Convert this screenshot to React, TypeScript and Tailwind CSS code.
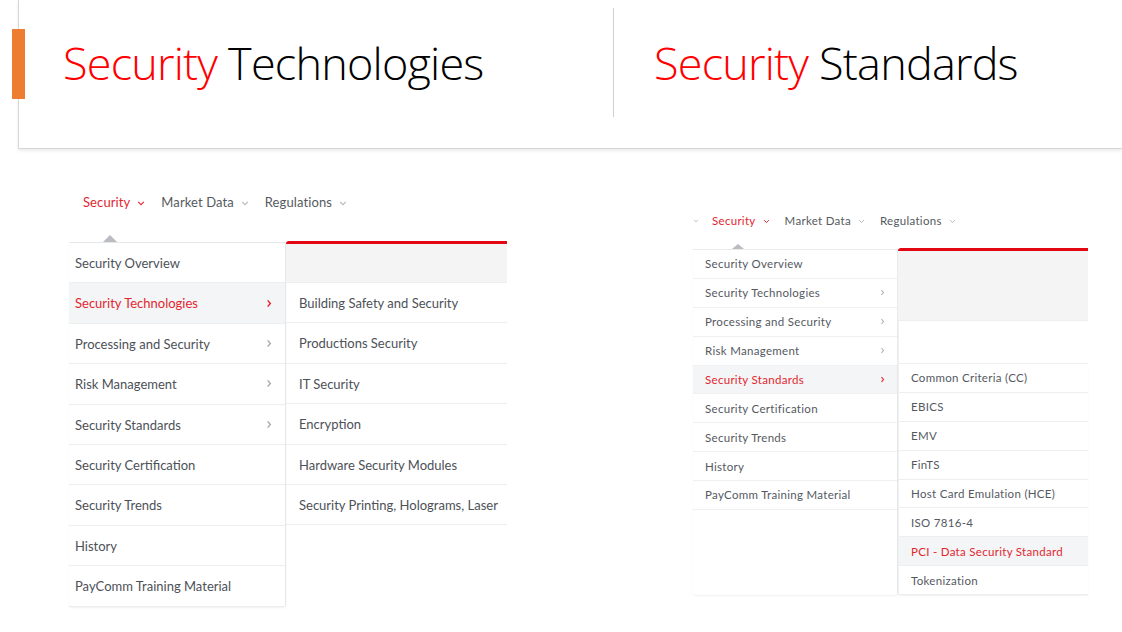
import React from "react";

const RED = "text-[#e3262f]";

function ChevronDown({ className }: { className?: string }) {
  return (
    <svg viewBox="0 0 10 6" className={className} fill="none" stroke="currentColor" strokeWidth="1.4">
      <polyline points="1.5,1 5,4.5 8.5,1" />
    </svg>
  );
}

function ChevronRight({ className }: { className?: string }) {
  return (
    <svg viewBox="0 0 6 10" className={className} fill="none" stroke="currentColor" strokeWidth="1.6">
      <polyline points="1.5,1.5 4.5,5 1.5,8.5" />
    </svg>
  );
}

function Nav({ small }: { small?: boolean }) {
  const text = small ? "text-[11.5px] tracking-[0.3px]" : "text-[13px] tracking-[0.1px]";
  const chev = small ? "w-[7px] h-[5px]" : "w-[8px] h-[5px]";
  const items = ["Security", "Market Data", "Regulations"];
  return (
    <div className={`flex items-center ${small ? "gap-[15px]" : "gap-[16px]"} ${text}`}>
      {items.map((label, i) => (
        <div key={label} className={`flex items-center gap-[7px] ${i === 0 ? RED : "text-[#555a60]"}`}>
          <span>{label}</span>
          <ChevronDown className={`${chev} ${i === 0 ? "" : "text-[#b5b8bc]"}`} />
        </div>
      ))}
    </div>
  );
}

const mainItems = [
  { label: "Security Overview", sub: false },
  { label: "Security Technologies", sub: true },
  { label: "Processing and Security", sub: true },
  { label: "Risk Management", sub: true },
  { label: "Security Standards", sub: true },
  { label: "Security Certification", sub: false },
  { label: "Security Trends", sub: false },
  { label: "History", sub: false },
  { label: "PayComm Training Material", sub: false },
];

const techItems = [
  "Building Safety and Security",
  "Productions Security",
  "IT Security",
  "Encryption",
  "Hardware Security Modules",
  "Security Printing, Holograms, Laser",
];

const standardItems = [
  "Common Criteria (CC)",
  "EBICS",
  "EMV",
  "FinTS",
  "Host Card Emulation (HCE)",
  "ISO 7816-4",
  "PCI - Data Security Standard",
  "Tokenization",
];

export default function App() {
  return (
    <div
      className="relative w-[1122px] h-[632px] bg-white overflow-hidden"
      style={{ fontFamily: "Lato, 'Noto Sans', sans-serif" }}
    >
      {/* slide header */}
      <div className="ml-[18px] h-[149px] border-l border-b border-[#d6d6d6] shadow-[0_2px_3px_rgba(0,0,0,0.08)] flex items-start">
        <div className="w-[594px] h-[124px] flex items-center pl-[44px]">
          <h1 className="text-[45px] font-light leading-none tracking-[-0.8px]" style={{ fontFamily: "'Open Sans', Lato, sans-serif" }}>
            <span className="text-[#ff0000]">Security</span> <span className="text-black">Technologies</span>
          </h1>
        </div>
        <div className="mt-[8px] h-[109px] border-l border-[#cfcfcf]" />
        <div className="h-[124px] flex items-center pl-[40px]">
          <h1 className="text-[45px] font-light leading-none tracking-[-0.8px]" style={{ fontFamily: "'Open Sans', Lato, sans-serif" }}>
            <span className="text-[#ff0000]">Security</span> <span className="text-black">Standards</span>
          </h1>
        </div>
      </div>
      <div className="absolute left-[12px] top-[29px] w-[13px] h-[70px] bg-[#ed7d31]" />

      <div className="flex items-start">
        {/* left screenshot */}
        <div className="ml-[69px] mt-[44px] w-[438px]">
          <div className="h-[20px] pl-[14px] flex items-center">
            <Nav />
          </div>
          <div className="h-[29px] flex items-end pl-[34px]">
            <div className="w-0 h-0 border-l-[7px] border-r-[7px] border-b-[7px] border-l-transparent border-r-transparent border-b-[#b9bcc0]" />
          </div>
          <div className="flex text-[13px] text-[#4d5157] whitespace-nowrap">
            <div className="w-[217px] border-t border-r border-[#e6e7e9] rounded-b-[3px] shadow-[0_1px_2px_rgba(0,0,0,0.06)]">
              {mainItems.map((it, i) => {
                const active = i === 1;
                return (
                  <div
                    key={it.label}
                    className={`h-[40.4px] flex items-center justify-between pl-[6px] pr-[13px] border-b border-[#eceef0] ${active ? "bg-[#f4f5f6] " + RED : ""}`}
                  >
                    <span className="pt-[2px]">{it.label}</span>
                    {it.sub && <ChevronRight className={`w-[6px] h-[9px] ${active ? "" : "text-[#a9acb0]"}`} />}
                  </div>
                );
              })}
            </div>
            <div className="flex-1 -mt-[1px]">
              <div className="h-[3px] bg-[#e30613] rounded-tl-[3px]" />
              <div className="h-[39px] bg-[#f4f4f5] border-b border-[#eceef0]" />
              {techItems.map((t) => (
                <div key={t} className="h-[40.4px] flex items-center pl-[13px] pt-[2px] border-b border-[#eceef0]">
                  {t}
                </div>
              ))}
            </div>
          </div>
        </div>

        {/* right screenshot */}
        <div className="ml-[186px] mt-[62px] w-[395px]">
          <div className="h-[20px] flex items-center">
            <ChevronDown className="w-[6px] h-[4px] text-[#b5b8bc] mr-[13px]" />
            <Nav small />
          </div>
          <div className="h-[18px] flex items-end pl-[39px]">
            <div className="w-0 h-0 border-l-[6px] border-r-[6px] border-b-[5px] border-l-transparent border-r-transparent border-b-[#b9bcc0]" />
          </div>
          <div className="flex text-[11.5px] text-[#55595f] tracking-[0.3px] whitespace-nowrap">
            <div className="w-[205px] border-t border-r border-[#e9eaec] rounded-b-[3px] shadow-[0_1px_2px_rgba(0,0,0,0.06)]">
              {mainItems.map((it, i) => {
                const active = i === 4;
                return (
                  <div
                    key={it.label}
                    className={`h-[28.9px] flex items-center justify-between pl-[12px] pr-[12px] border-b border-[#eef0f2] ${active ? "bg-[#f4f5f6] " + RED : ""}`}
                  >
                    <span>{it.label}</span>
                    {it.sub && <ChevronRight className={`w-[5px] h-[7px] ${active ? "" : "text-[#b0b3b7]"}`} />}
                  </div>
                );
              })}
            </div>
            <div className="w-[190px] -mt-[1px]">
              <div className="h-[3px] bg-[#e30613] rounded-tl-[3px]" />
              <div className="h-[70px] bg-[#f4f4f5] border-b border-[#eceef0]" />
              <div className="h-[43px] border-b border-[#eceef0] border-l border-l-[#eef0f2]" />
              <div className="border-l border-[#eef0f2] rounded-bl-[3px] shadow-[0_1px_2px_rgba(0,0,0,0.06)]">
                {standardItems.map((t, i) => (
                  <div
                    key={t}
                    className={`h-[28.9px] flex items-center pl-[12px] border-b border-[#eceef0] ${i === 6 ? "bg-[#f4f5f6] " + RED : ""}`}
                  >
                    {t}
                  </div>
                ))}
              </div>
            </div>
          </div>
        </div>
      </div>
    </div>
  );
}
